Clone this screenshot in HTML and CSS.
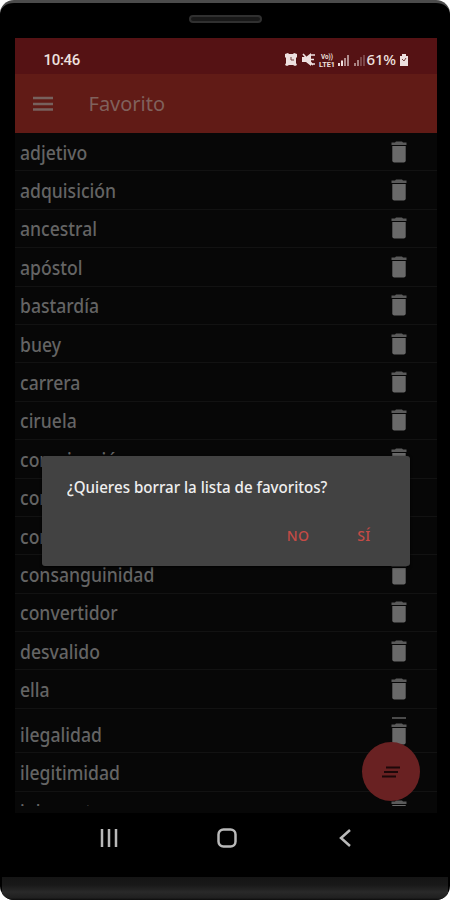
FILE: index.html
```html
<!DOCTYPE html>
<html lang="es">
<head>
    <meta charset="UTF-8">
    <meta name="viewport" content="width=device-width, initial-scale=1.0">
    <title>Favorito</title>
    <link rel="stylesheet" href="styles.css">
</head>
<body>
    <svg class="sprite" width="0" height="0">
        <symbol id="trash" viewBox="0 0 16 22">
            <path d="M5 .5h6l1 1h3.500v2.600H.5V1.500H4z" opacity=".85"/>
            <path d="M1.300 4.900h13.400V19.500q0 2-2 2H3.300q-2 0-2-2z"/>
        </symbol>
    </svg>

    <div class="phone">
        <div class="top-bezel"><div class="speaker"></div></div>

        <div class="screen">
            <div class="status-bar">
                <span class="clock">10:46</span>
                <svg class="status-icons" width="82" height="16" viewBox="0 0 82 16" fill="#eee0df">
                    <path d="M0 2l3-1 1 1h4l1-1 3 1v3l-1 1v5l1 2-2 1-2-1H4l-2 1-2-1 1-2V6L0 5z"/>
                    <path d="M6 5v3h3" fill="none" stroke="#75403f"/>
                    <path d="M17 5h4l5-4v13l-5-4h-4z"/>
                    <path d="M18 2l10 11M25 3h5M25 7.500h4M25 12h5" stroke="#eee0df" stroke-width="1.700"/>
                    <text x="36" y="6.500" font-size="6.500" textLength="12" lengthAdjust="spacingAndGlyphs">Vo))</text>
                    <text x="34" y="14.500" font-size="7.500" textLength="16" lengthAdjust="spacingAndGlyphs">LTE1</text>
                    <path d="M53 11h2v3h-2zM56 8.500h2V14h-2z"/>
                    <path d="M59 6h2v8h-2zM62 3h2v11h-2z" opacity=".6"/>
                    <path d="M69 11h2v3h-2zM72 8h2v6h-2z" opacity=".55"/>
                    <path d="M75 5h2v9h-2zM78 3h2v11h-2z" opacity=".25"/>
                </svg>
                <span class="percent">61%</span>
                <svg class="battery" width="10" height="14" viewBox="0 0 10 14">
                    <path d="M3 1h4v2h2v10H1V3h2z" fill="#eee0df"/>
                    <path d="M3 6l2 2 2-3" fill="none" stroke="#75403f"/>
                </svg>
            </div>

            <div class="toolbar">
                <svg width="20" height="16" viewBox="0 0 20 16">
                    <path d="M0 2h20M0 8h20M0 13.500h20" stroke="#77615d" stroke-width="2.400"/>
                </svg>
                <h1>Favorito</h1>
            </div>

            <div class="list">
                <div class="row"><span>adjetivo</span><svg class="trash"><use href="#trash"/></svg></div>
                <div class="row"><span>adquisición</span><svg class="trash"><use href="#trash"/></svg></div>
                <div class="row"><span>ancestral</span><svg class="trash"><use href="#trash"/></svg></div>
                <div class="row"><span>apóstol</span><svg class="trash"><use href="#trash"/></svg></div>
                <div class="row"><span>bastardía</span><svg class="trash"><use href="#trash"/></svg></div>
                <div class="row"><span>buey</span><svg class="trash"><use href="#trash"/></svg></div>
                <div class="row"><span>carrera</span><svg class="trash"><use href="#trash"/></svg></div>
                <div class="row"><span>ciruela</span><svg class="trash"><use href="#trash"/></svg></div>
                <div class="row"><span>conminación</span><svg class="trash"><use href="#trash"/></svg></div>
                <div class="row"><span>con</span><svg class="trash"><use href="#trash"/></svg></div>
                <div class="row"><span>con</span><svg class="trash"><use href="#trash"/></svg></div>
                <div class="row"><span>consanguinidad</span><svg class="trash"><use href="#trash"/></svg></div>
                <div class="row"><span>convertidor</span><svg class="trash"><use href="#trash"/></svg></div>
                <div class="row"><span>desvalido</span><svg class="trash"><use href="#trash"/></svg></div>
                <div class="row"><span>ella</span><svg class="trash"><use href="#trash"/></svg></div>
                <div class="seam"></div>
                <div class="row"><span>ilegalidad</span><svg class="trash"><use href="#trash"/></svg></div>
                <div class="row"><span>ilegitimidad</span><svg class="trash"><use href="#trash"/></svg></div>
                <div class="row last"><span>inherente</span><svg class="trash"><use href="#trash"/></svg></div>
            </div>

            <div class="fab">
                <svg width="20" height="12" viewBox="0 0 20 12">
                    <path d="M5 1.500h14M3 6h14M1 10.500h14" stroke="#1d0809" stroke-width="2"/>
                </svg>
            </div>

            <div class="dialog">
                <p><span class="question">¿Quieres borrar la lista de favoritos?</span></p>
                <div class="dialog-actions">
                    <span class="btn">NO</span>
                    <span class="btn">SÍ</span>
                </div>
            </div>
        </div>

        <div class="nav-bar">
            <svg width="18" height="18" viewBox="0 0 18 18"><path d="M2 0v18M9 0v18M16 0v18"/></svg>
            <svg class="home" width="20" height="20" viewBox="0 0 20 20"><rect x="1.500" y="1.500" width="17" height="17" rx="5"/></svg>
            <svg width="12" height="18" viewBox="0 0 12 18"><path d="M11 1L2 9l9 8"/></svg>
        </div>
        <div class="bottom-edge"></div>
    </div>
</body>
</html>
```
FILE: styles.css
```css
* {
    margin: 0;
    padding: 0;
    box-sizing: border-box;
}

body {
    background: #fff;
    font-family: "Noto Sans", sans-serif;
    width: 450px;
    height: 900px;
    overflow: hidden;
}

.sprite {
    position: absolute;
}

.phone {
    width: 450px;
    height: 900px;
    background: #000;
    border-top: 3px solid #4b4b4b;
    border-radius: 14px;
    overflow: hidden;
    display: flex;
    flex-direction: column;
}

.top-bezel {
    height: 35px;
    flex: none;
    display: flex;
    justify-content: center;
    padding-top: 12px;
}

.speaker {
    width: 73px;
    height: 8px;
    border: 2px solid #303030;
    border-radius: 4px;
    background: #181818;
}

.screen {
    position: relative;
    width: 422px;
    height: 775px;
    flex: none;
    margin-left: 14.5px;
    background: #070707;
    overflow: hidden;
}

.status-bar {
    height: 36px;
    background: #551214;
    color: #eee0df;
    display: flex;
    align-items: center;
    padding: 7px 28px 0 29px;
}

.clock {
    font-family: Roboto, sans-serif;
    font-size: 15px;
    font-weight: 500;
    letter-spacing: -0.3px;
    margin-right: auto;
}

.status-icons {
    flex: none;
    font-family: Roboto, sans-serif;
    font-weight: 700;
}

.percent {
    font-size: 15px;
    font-weight: 500;
    letter-spacing: -0.2px;
    width: 32px;
    line-height: 16px;
    margin-top: -1px;
}

.toolbar {
    height: 59px;
    background: #611b16;
    display: flex;
    align-items: center;
    gap: 36px;
    padding-left: 18px;
}

.toolbar h1 {
    font-size: 20px;
    font-weight: 400;
    color: #80615c;
}

.list {
    height: 673px;
    overflow: hidden;
}

.row {
    height: 38.4px;
    border-bottom: 1px solid #121212;
    display: flex;
    align-items: center;
    justify-content: space-between;
    padding: 2px 30px 0 5px;
    color: #646464;
    font-size: 19px;
    font-weight: 500;
}

.row span {
    line-height: 30px;
    transform: scaleX(0.925);
    transform-origin: left;
}

.trash {
    width: 16px;
    height: 22px;
    margin-bottom: 2px;
    fill: #696969;
}

.seam {
    height: 6px;
    position: relative;
}

/* leftover lid between the two halves of the list */
.seam::after {
    content: "";
    position: absolute;
    right: 31px;
    bottom: -4px;
    width: 14px;
    height: 2px;
    background: #4a4a4a;
}

.last {
    border-bottom: none;
}

.last span {
    padding-top: 1px;
}

.fab {
    position: absolute;
    left: 347.5px;
    top: 704px;
    width: 58px;
    height: 59px;
    border-radius: 50%;
    background: #692122;
    display: flex;
    align-items: center;
    justify-content: center;
}

.dialog {
    position: absolute;
    left: 27px;
    top: 418px;
    width: 368px;
    height: 110px;
    background: #424242;
    border-radius: 3px;
    box-shadow: 0 1px 3px #000;
    padding: 18px 25px 0;
}

.dialog p {
    font-size: 16px;
    font-weight: 500;
    line-height: 26px;
    color: #efefef;
    white-space: nowrap;
}

.question {
    display: inline-block;
    transform: scaleX(0.945);
    transform-origin: left;
}

.dialog-actions {
    display: flex;
    justify-content: flex-end;
    gap: 48px;
    padding-right: 14px;
    margin-top: 26px;
}

.btn {
    font-size: 14px;
    font-weight: 500;
    line-height: 20px;
    color: #c54b46;
    letter-spacing: 0.3px;
}

.nav-bar {
    height: 64px;
    flex: none;
    display: flex;
    justify-content: space-between;
    align-items: center;
    padding: 0 99px 14px 100px;
}

.nav-bar svg {
    fill: none;
    stroke: #b9b9b9;
    stroke-width: 2.5;
}

.nav-bar .home {
    margin-right: 4px;
}

.bottom-edge {
    flex: 1;
    margin: 0 2px;
    background: linear-gradient(#151515, #191919 35%, #292929 65%, #202020 90%, #0c0c0c);
}
```
